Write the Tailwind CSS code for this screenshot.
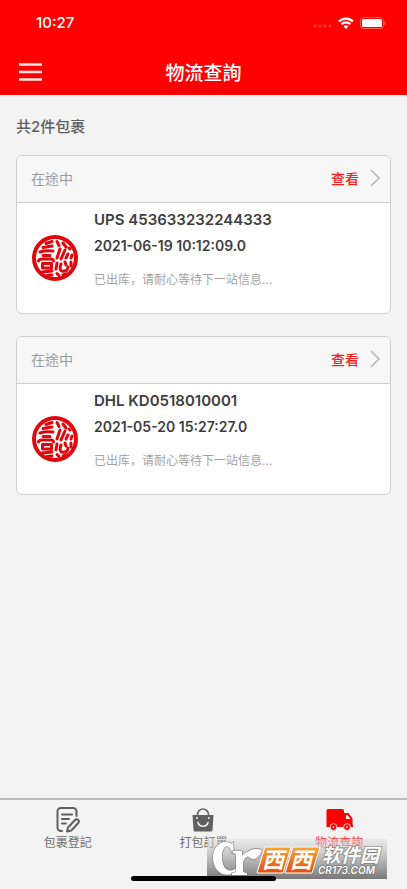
<!DOCTYPE html>
<html lang="zh-Hant">
<head>
  <meta charset="UTF-8" />
  <meta name="viewport" content="width=device-width, initial-scale=1.0"/>
  <title>物流查詢</title>
  <script src="https://cdn.jsdelivr.net/npm/@tailwindcss/browser@4"></script>
</head>
<body class="bg-[#f3f3f3] font-['Inter','Noto_Sans_CJK_SC',sans-serif]">
  <!-- Shared seal logo -->
  <svg class="hidden">
    <symbol id="seal" viewBox="0 0 46 46">
      <circle cx="23" cy="23" r="21" fill="#fff" stroke="#e0060c" stroke-width="4"/>
      <g fill="none" stroke="#e0060c" stroke-width="3" stroke-linecap="round" stroke-linejoin="round">
        <path d="M14 8.500l6-2M11 12.500l9-1.500M8 17c4-1.500 9-1.500 13-1M11 20.500h7M6.500 26c0-2 2-2 4-2h8c2 0 3 0 3 2M10.500 28.500h9v4.500h-9zM10 37l10-1M15 40.500l5-.5"/>
        <path d="M25 6.500l2 4M31 8l3 4M37 13l1 1M28 14l-3 9M33 15l-4 9M36 19l-2 4M40 20l-1 3M25 28l-1 6M29 29c-2 6 0 8 3 7 3 0 4-2 4-4M33 27l1 3M39 27v4M25 38.500l2 2M31 40l3-1"/>
      </g>
    </symbol>
  </svg>

  <div class="flex flex-col min-h-screen">
    <header class="bg-[#ff0000] text-white h-[95px]">
      <div class="flex items-center justify-between h-[46px] pl-9 pr-[21px]">
        <span class="text-[15px] font-medium">10:27</span>
        <div class="flex items-center gap-[6px]">
          <svg class="w-5 h-3" viewBox="0 0 20 12" fill="#fff" fill-opacity=".25">
            <circle cx="3" cy="9" r="1.600"/><circle cx="8" cy="9" r="1.600"/><circle cx="13" cy="9" r="1.600"/><circle cx="18" cy="9" r="1.600"/>
          </svg>
          <svg class="w-4 h-3" viewBox="0 0 16 12" fill="none" stroke="#fff" stroke-width="2.200">
            <path d="M1 4.500a10 10 0 0 1 14 0M3.500 7.300a6.400 6.400 0 0 1 9 0"/>
            <path d="M8 12L5.600 9.500a3.400 3.400 0 0 1 4.800 0z" fill="#fff" stroke="none"/>
          </svg>
          <svg class="w-[26px] h-3" viewBox="0 0 26 12">
            <rect x=".5" y=".5" width="23" height="11" rx="3" fill="none" stroke="#fff" stroke-opacity=".35"/>
            <rect x="2" y="2" width="20" height="8" rx="1.500" fill="#fff"/>
            <path d="M24.500 4c2 .6 2 3.400 0 4z" fill="#fff" fill-opacity=".4"/>
          </svg>
        </div>
      </div>
      <div class="grid grid-cols-[1fr_auto_1fr] items-center px-[18px] h-[52px]">
        <button type="button" aria-label="Menu" class="w-6">
          <svg class="w-6 h-5" viewBox="0 0 24 20" stroke="#fff" stroke-opacity=".9" stroke-width="2.500">
            <path d="M1 2.500h23M1 10h23M1 17.500h23"/>
          </svg>
        </button>
        <h1 class="text-[19px] leading-6 font-medium font-['Noto_Sans_CJK_TC',sans-serif]">物流查詢</h1>
      </div>
    </header>

    <main class="flex-1 px-4 pt-5">
      <h2 class="text-[15px] leading-6 font-medium text-[#606060]">共2件包裹</h2>

      <div class="mt-4 flex flex-col gap-[22px]">
        <section class="border border-[#cfcfcf] rounded-md overflow-hidden bg-white">
          <div class="flex items-center justify-between h-[47px] pl-[14px] pr-[9px] pb-[2px] bg-[#f7f7f7] border-b border-[#cfcfcf]">
            <span class="text-[14px] text-[#9b9b9b]">在途中</span>
            <a href="#" class="flex items-center gap-[10px] text-[14px] font-medium text-[#fa1d1d]">
              查看
              <svg class="w-3 h-[18px]" viewBox="0 0 12 18" fill="none" stroke="#b4b4b4" stroke-width="1.500"><path d="M2 1l8 8-8 8"/></svg>
            </a>
          </div>
          <div class="flex items-center gap-4 h-[110px] pl-[15px] pr-3">
            <svg class="w-[46px] h-[46px] shrink-0"><use href="#seal"/></svg>
            <div class="h-full pt-1">
              <p class="text-[15px] leading-[26px] font-semibold text-[#3e3e3e]">UPS 453633232244333</p>
              <p class="text-[14px] leading-[26px] font-semibold text-[#3e3e3e]">2021-06-19 10:12:09.0</p>
              <p lang="zh-Hans" class="mt-2 text-[12px] leading-[26px] text-[#a3a3a3]">已出库，请耐心等待下一站信息...</p>
            </div>
          </div>
        </section>

        <section class="border border-[#cfcfcf] rounded-md overflow-hidden bg-white">
          <div class="flex items-center justify-between h-[47px] pl-[14px] pr-[9px] pb-[2px] bg-[#f7f7f7] border-b border-[#cfcfcf]">
            <span class="text-[14px] text-[#9b9b9b]">在途中</span>
            <a href="#" class="flex items-center gap-[10px] text-[14px] font-medium text-[#fa1d1d]">
              查看
              <svg class="w-3 h-[18px]" viewBox="0 0 12 18" fill="none" stroke="#b4b4b4" stroke-width="1.500"><path d="M2 1l8 8-8 8"/></svg>
            </a>
          </div>
          <div class="flex items-center gap-4 h-[110px] pl-[15px] pr-3">
            <svg class="w-[46px] h-[46px] shrink-0"><use href="#seal"/></svg>
            <div class="h-full pt-1">
              <p class="text-[15px] leading-[26px] font-semibold text-[#3e3e3e]">DHL KD0518010001</p>
              <p class="text-[14px] leading-[26px] font-semibold text-[#3e3e3e]">2021-05-20 15:27:27.0</p>
              <p lang="zh-Hans" class="mt-2 text-[12px] leading-[26px] text-[#a3a3a3]">已出库，请耐心等待下一站信息...</p>
            </div>
          </div>
        </section>
      </div>
    </main>

    <footer class="relative border-t-2 border-[#bdbdbd] h-[91px] font-['Noto_Sans_CJK_TC',sans-serif]">
      <nav class="grid grid-cols-3 pt-[6px] text-[12px] leading-4 text-[#6d6d6d]">
        <a href="#" class="flex flex-col items-center gap-[1px]">
          <svg class="w-[26px] h-[27px]" viewBox="0 0 26 27" fill="none" stroke="#606060" stroke-width="2" stroke-linecap="round" stroke-linejoin="round">
            <path d="M7 25H6a3.500 3.500 0 0 1-3.500-3.500v-16A3.500 3.500 0 0 1 6 2h12a3.500 3.500 0 0 1 3.500 3.500V10M7 8.500h10M7 13h7M7 17.500h4"/>
            <path d="M13 21.500l7-7.500a2.200 2.200 0 0 1 3.300 3l-7 7.500-4.300 1z"/>
          </svg>
          包裹登記
        </a>
        <a href="#" class="flex flex-col items-center gap-[1px]">
          <svg class="w-[26px] h-[27px]" viewBox="0 0 26 27">
            <path d="M7.500 11V8.500a5.500 5.500 0 0 1 11 0V11" fill="none" stroke="#606060" stroke-width="1.600"/>
            <path d="M2.500 9h21l-1 15a1.500 1.500 0 0 1-1.500 1.500H5A1.500 1.500 0 0 1 3.500 24z" fill="#606060"/>
            <path d="M8 16.500c1.500 5 8.500 5 10 0" fill="none" stroke="#f3f3f3" stroke-width="1.600" stroke-linecap="round"/>
            <circle cx="7" cy="12" r="1" fill="#f3f3f3"/><circle cx="19" cy="12" r="1" fill="#f3f3f3"/>
          </svg>
          打包訂單
        </a>
        <a href="#" class="flex flex-col items-center gap-[1px] text-[#ff2b2b]">
          <svg class="w-[27px] h-[27px]" viewBox="0 0 27 27">
            <path d="M2 3h14.500A1.500 1.500 0 0 1 18 4.500V7h4.500l4 5.500v6l.5.500v2H.5V4.500A1.500 1.500 0 0 1 2 3z" fill="#ff0000"/>
            <path d="M20 9h1.500l3 4H20z" fill="#f3f3f3"/>
            <g fill="#ff0000" stroke="#f3f3f3" stroke-width=".8"><circle cx="7.500" cy="21" r="3.400"/><circle cx="21" cy="21" r="3.400"/></g>
            <circle cx="7.500" cy="21" r=".9" fill="#f3f3f3"/><circle cx="21" cy="21" r=".9" fill="#f3f3f3"/>
          </svg>
          物流查詢
        </a>
      </nav>

      <!-- Site watermark -->
      <svg class="absolute right-5 bottom-[10px] w-[180px] h-10" viewBox="0 0 180 40">
        <defs>
          <linearGradient id="shade" x1="0" y1="0" x2="0" y2="1"><stop offset="0" stop-color="#ddd" stop-opacity=".45"/><stop offset=".5" stop-color="#aaa" stop-opacity=".8"/><stop offset="1" stop-color="#777"/></linearGradient>
          <linearGradient id="tile" x1="0" y1="0" x2="0" y2="1"><stop offset="0" stop-color="#f7a634"/><stop offset="1" stop-color="#df4f16"/></linearGradient>
        </defs>
        <rect width="180" height="40" fill="url(#shade)"/>
        <g fill="#fff" stroke="#777" stroke-opacity=".7" stroke-width="1.600" stroke-linejoin="round" paint-order="stroke">
          <path d="M26 3l1 11h-2C23 4 15 5 15 18c0 12 7 17 14 11l1 3C21 40 6 35 6 19 6 5 17 0 24 5z"/>
          <path d="M26 12h9v5c2-3 4-4 6-4 3-3 8-4 14-2-3 9-9 12-14 6-3 2-5 4-5 8v6c0 2 1 3 4 3v2H25v-2c3 0 4-1 4-3V17c0-2-1-3-3-3z"/>
        </g>
        <path d="M58 8h26l-8 26H50zM86 8h27l-8 26H78z" fill="url(#tile)" stroke="#fff" stroke-width="1"/>
        <g fill="#fff" font-family="'Noto Sans CJK SC', sans-serif" font-weight="bold" font-style="italic">
          <text x="55" y="29" font-size="22">西</text>
          <text x="83" y="29" font-size="22">西</text>
          <text x="115" y="23" font-size="19" stroke="#888" stroke-width="1.500" paint-order="stroke">软件园</text>
        </g>
        <text x="111" y="35" font-size="10" font-family="Inter, sans-serif" font-weight="600" font-style="italic" fill="#fff" stroke="#777" stroke-width="1.500" paint-order="stroke">CR173.COM</text>
      </svg>

      <!-- Home indicator -->
      <div class="absolute inset-x-0 bottom-[8px] mx-auto w-[145px] h-[5px] rounded-full bg-black"></div>
    </footer>
  </div>
</body>
</html>
